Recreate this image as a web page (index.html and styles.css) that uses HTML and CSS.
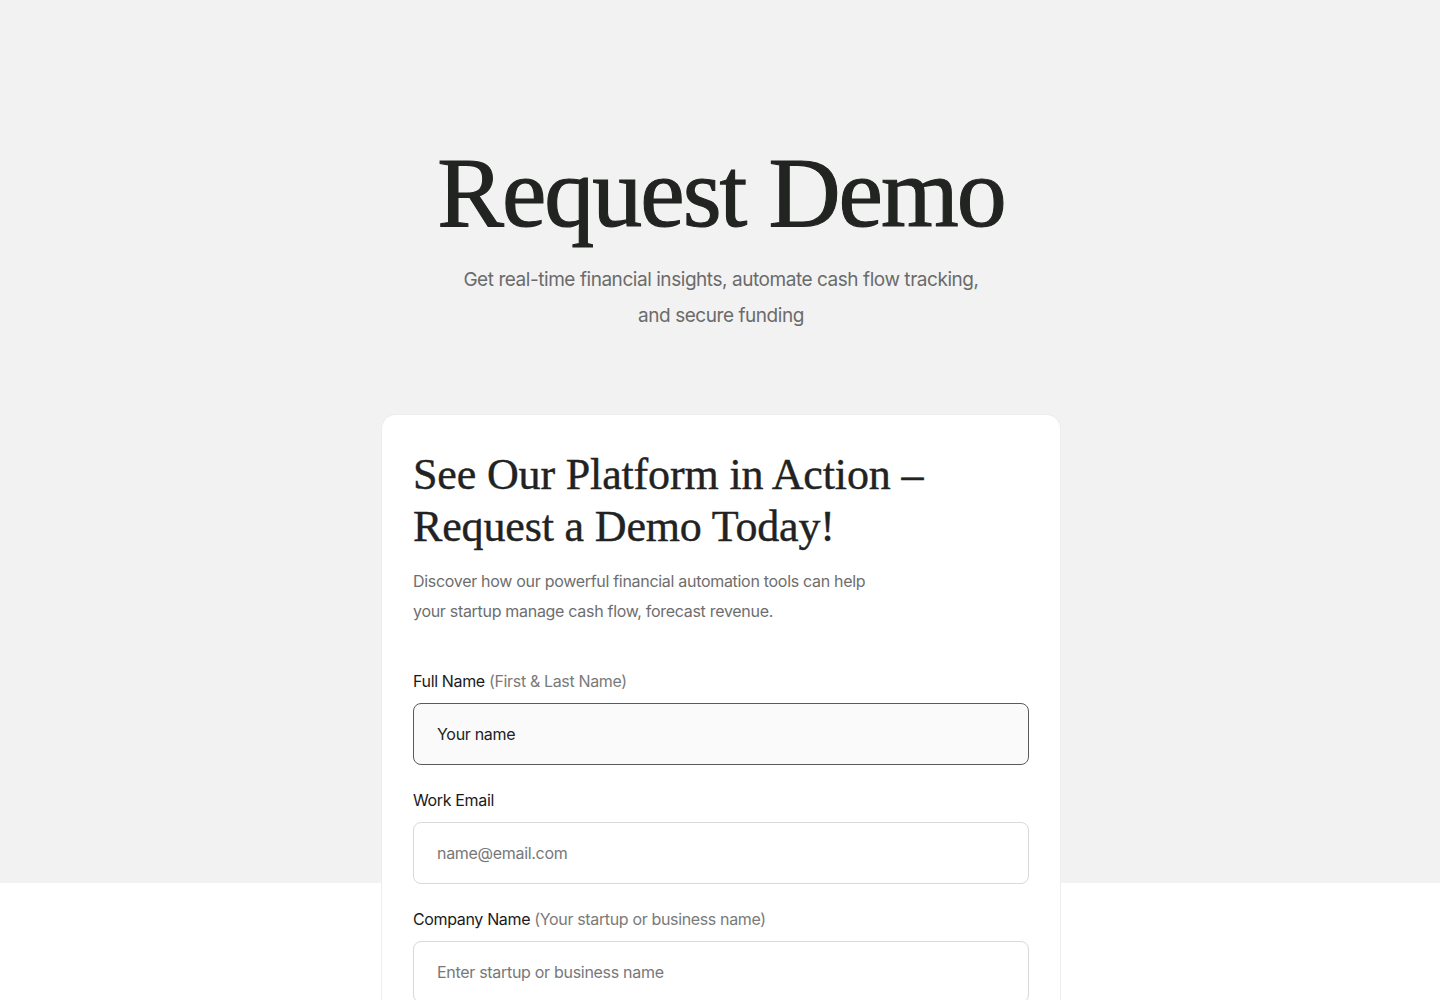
FILE: index.html
```html
<!DOCTYPE html>
<html lang="en">
<head>
  <meta charset="UTF-8">
  <title>Request Demo</title>
  <link rel="stylesheet" href="styles.css">
</head>
<body>
<div id="page">
  <div id="hero">
    <h1 class="hero_title">Request Demo</h1>
    <p class="hero_sub">Get real-time financial insights, automate cash flow tracking,<br>and secure funding</p>
  </div>

  <div id="card">
    <h2 class="card_title">See Our Platform in Action –<br>Request a Demo Today!</h2>
    <p class="card_text">Discover how our powerful financial automation tools can help<br>your startup manage cash flow, forecast revenue.</p>

    <form class="form">
      <div class="field">
        <label class="label">Full Name <span class="hint">(First &amp; Last Name)</span></label>
        <input class="input focus" type="text" value="Your name">
      </div>
      <div class="field">
        <label class="label">Work Email</label>
        <input class="input" type="email" placeholder="name@email.com">
      </div>
      <div class="field">
        <label class="label">Company Name <span class="hint">(Your startup or business name)</span></label>
        <input class="input" type="text" placeholder="Enter startup or business name">
      </div>
    </form>
  </div>
</div>
</body>
</html>
```

FILE: styles.css
```css
* {
  margin: 0;
  padding: 0;
  box-sizing: border-box;
}

body {
  font-family: Inter, "Liberation Sans", sans-serif;
  color: #1f1f1f;
  background: linear-gradient(#f2f2f2 0, #f2f2f2 883px, #fff 883px);
  min-height: 1000px;
}

#page {
  display: flex;
  flex-direction: column;
  align-items: center;
  padding-top: 138px;
  padding-left: 2px;
}

#hero {
  text-align: center;
}

.hero_title {
  font-family: "Liberation Serif", serif;
  font-weight: normal;
  font-size: 100px;
  line-height: 110px;
  letter-spacing: -2px;
  color: #222422;
  -webkit-text-stroke: 1.1px #222422;
}

.hero_sub {
  margin-top: 14px;
  font-size: 19px;
  line-height: 36px;
  letter-spacing: -0.45px;
  color: #6b6b6b;
}

#card {
  width: 678px;
  margin-top: 81px;
  padding: 34px 31px 60px;
  background: #fff;
  box-shadow: 0 0 0 1px #ededed;
  border-radius: 14px;
}

.card_title {
  font-family: "Liberation Serif", serif;
  font-weight: normal;
  font-size: 44px;
  line-height: 52px;
  letter-spacing: -0.15px;
  color: #222;
  -webkit-text-stroke: 0.4px #222;
}

.card_text {
  margin-top: 13px;
  font-size: 16px;
  line-height: 30px;
  letter-spacing: -0.3px;
  color: #6e6e6e;
}

.form {
  margin-top: 45px;
  display: flex;
  flex-direction: column;
  gap: 25px;
}

.field {
  display: flex;
  flex-direction: column;
  gap: 12px;
}

.label {
  font-size: 16px;
  line-height: 20px;
  letter-spacing: -0.35px;
  color: #1a1a1a;
}

.hint {
  color: #7a7a7a;
}

.input {
  width: 100%;
  height: 62px;
  padding: 0 23px;
  font-family: inherit;
  font-size: 16px;
  letter-spacing: -0.3px;
  color: #222;
  background: #fff;
  border: 1px solid #d9d9d9;
  border-radius: 8px;
  outline: none;
}

.input::placeholder {
  color: #787878;
}

.input.focus {
  background: #fafafa;
  border-color: #5a5a5a;
}
```
